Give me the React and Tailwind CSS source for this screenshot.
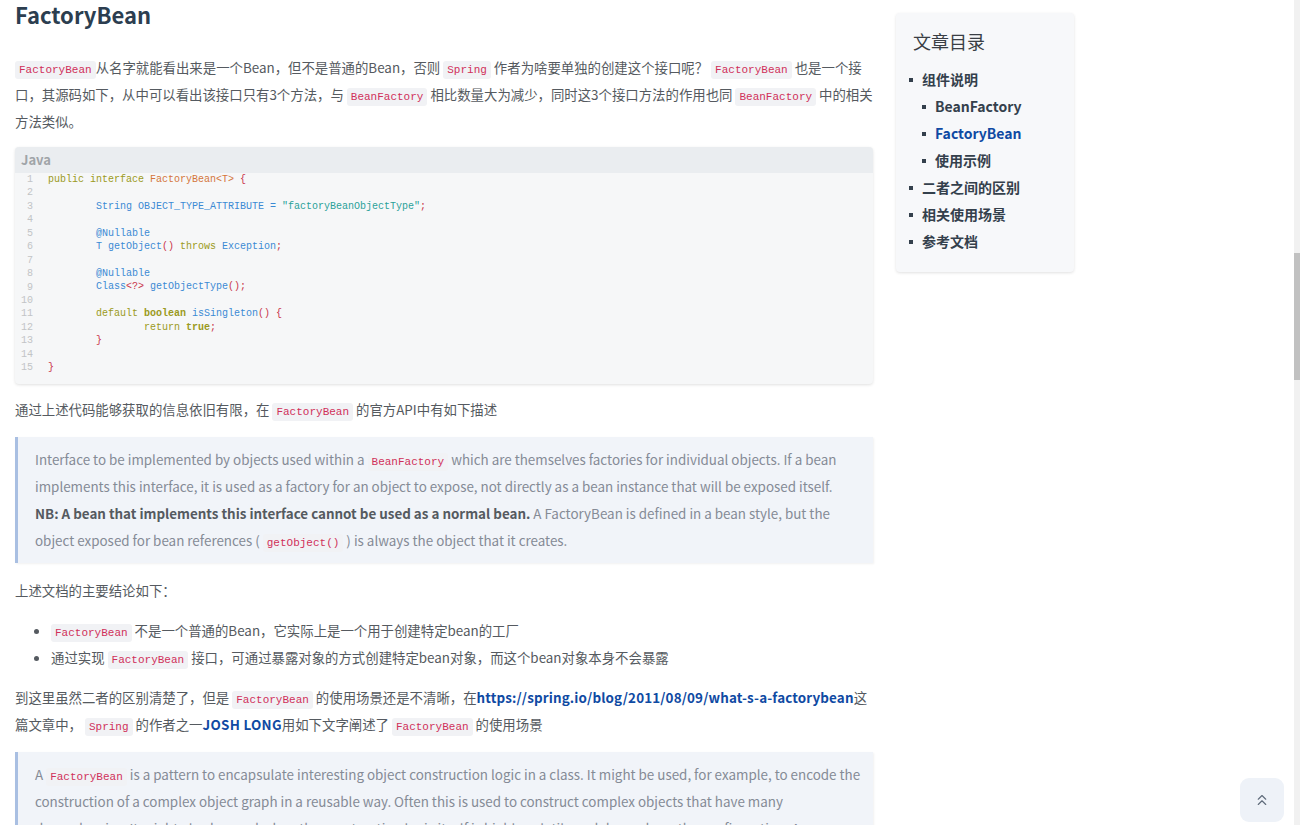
import React from "react";
import { ChevronsUp } from "lucide-react";

const C = ({ children }) => (
  <code className="font-['Liberation_Mono',monospace] text-[11px] leading-[14px] text-[#d0305a] bg-[#f1f2f5] px-[4px] py-[3px] rounded-[3px]">
    {children}
  </code>
);

const KW = "text-[#9b9a21]";
const OR = "text-[#d4763b]";
const BL = "text-[#3b8ad4]";
const RD = "text-[#c9344a]";
const TL = "text-[#2aa198]";

const T = "        ";
const codeLines = [
  [[KW, "public interface "], [OR, "FactoryBean<T>"], [RD, " {"]],
  [],
  [["", T], [BL, "String OBJECT_TYPE_ATTRIBUTE = "], [TL, '"factoryBeanObjectType"'], [RD, ";"]],
  [],
  [["", T], [BL, "@Nullable"]],
  [["", T], [BL, "T getObject"], [RD, "()"], [KW, " throws "], [BL, "Exception"], [RD, ";"]],
  [],
  [["", T], [BL, "@Nullable"]],
  [["", T], [BL, "Class"], [RD, "<?>"], [BL, " getObjectType"], [RD, "();"]],
  [],
  [["", T], [KW, "default "], [KW + " font-bold", "boolean"], [BL, " isSingleton"], [RD, "() {"]],
  [["", T + T], [KW, "return "], [KW + " font-bold", "true"], [RD, ";"]],
  [["", T], [RD, "}"]],
  [],
  [[RD, "}"]],
];

const tocItems = [
  { t: "组件说明", lvl: 1 },
  { t: "BeanFactory", lvl: 2 },
  { t: "FactoryBean", lvl: 2, active: true },
  { t: "使用示例", lvl: 2 },
  { t: "二者之间的区别", lvl: 1 },
  { t: "相关使用场景", lvl: 1 },
  { t: "参考文档", lvl: 1 },
];

export default function App() {
  return (
    <div className="w-[1300px] h-[825px] overflow-hidden bg-white flex font-['Noto_Sans_CJK_SC',sans-serif]">
      <div className="flex-1 relative flex items-start pl-[15px]">
        {/* main content */}
        <div className="w-[858px] shrink-0 text-[13.4px] leading-[27px] text-[#555a60]">
          <h2 className="text-[22px] leading-[28px] font-bold text-[#2c3e50]">FactoryBean</h2>

          <p className="mt-[26px]">
            <C>FactoryBean</C>从名字就能看出来是一个Bean，但不是普通的Bean，否则 <C>Spring</C> 作者为啥要单独的创建这个接口呢？ <C>FactoryBean</C> 也是一个接口，其源码如下，从中可以看出该接口只有3个方法，与 <C>BeanFactory</C> 相比数量大为减少，同时这3个接口方法的作用也同 <C>BeanFactory</C> 中的相关方法类似。
          </p>

          <div className="mt-[12px] rounded-[4px] overflow-hidden bg-[#f6f7f8] shadow-[0_1px_3px_rgba(0,0,0,0.12)]">
            <div className="h-[26px] bg-[#eaedf0] px-[6px] text-[13px] leading-[26px] font-bold text-[#a0a4a8]">Java</div>
            <div className="flex pb-[9px] font-['Liberation_Mono',monospace] text-[10px] leading-[13.43px]">
              <div className="w-[18px] shrink-0 pr-[15px] text-right text-[#c2c4c6] box-content">
                {codeLines.map((_, i) => (
                  <div key={i}>{i + 1}</div>
                ))}
              </div>
              <div className="whitespace-pre">
                {codeLines.map((line, i) => (
                  <div key={i} className="h-[13.43px]">
                    {line.map(([cls, s], j) => (
                      <span key={j} className={cls}>{s}</span>
                    ))}
                  </div>
                ))}
              </div>
            </div>
          </div>

          <p className="mt-[12px]">
            通过上述代码能够获取的信息依旧有限，在 <C>FactoryBean</C> 的官方API中有如下描述
          </p>

          <blockquote className="mt-[14px] border-l-[3px] border-[#a9bfe2] bg-[#f1f4f9] pl-[17px] pr-[6px] py-[9px] text-[#858b96] shadow-[1px_1px_2px_rgba(0,0,0,0.06)]">
            Interface to be implemented by objects used within a  <C>BeanFactory</C>  which are themselves factories for individual objects. If a bean implements this interface, it is used as a factory for an object to expose, not directly as a bean instance that will be exposed itself.
            <br />
            <b className="text-[#555a60]">NB: A bean that implements this interface cannot be used as a normal bean.</b> A FactoryBean is defined in a bean style, but the object exposed for bean references ( <C>getObject()</C> ) is always the object that it creates.
          </blockquote>

          <p className="mt-[14px]">上述文档的主要结论如下：</p>

          <ul className="mt-[13px] pl-[36px] list-disc marker:text-[#555a60]">
            <li><C>FactoryBean</C> 不是一个普通的Bean，它实际上是一个用于创建特定bean的工厂</li>
            <li>通过实现 <C>FactoryBean</C> 接口，可通过暴露对象的方式创建特定bean对象，而这个bean对象本身不会暴露</li>
          </ul>

          <p className="mt-[13px]">
            到这里虽然二者的区别清楚了，但是 <C>FactoryBean</C> 的使用场景还是不清晰，在<a className="font-bold tracking-[0.15px] text-[#0f4aa3]">https://spring.io/blog/2011/08/09/what-s-a-factorybean</a>这篇文章中， <C>Spring</C> 的作者之一<b className="text-[#0f4aa3] tracking-[0.3px]">JOSH LONG</b>用如下文字阐述了 <C>FactoryBean</C> 的使用场景
          </p>

          <blockquote className="mt-[14px] border-l-[3px] border-[#a9bfe2] bg-[#f1f4f9] pl-[17px] pr-[6px] py-[9px] text-[#858b96] shadow-[1px_1px_2px_rgba(0,0,0,0.06)]">
            A  <C>FactoryBean</C>  is a pattern to encapsulate interesting object construction logic in a class. It might be used, for example, to encode the construction of a complex object graph in a reusable way. Often this is used to construct complex objects that have many dependencies. It might also be used when the construction logic itself is highly volatile and depends on the configuration. A FactoryBean is also useful to help Spring construct objects that it couldn’t easily construct itself.
          </blockquote>
        </div>

        {/* TOC */}
        <div className="ml-[23px] mt-[13px] w-[178px] shrink-0 bg-[#f7f8fa] rounded-[4px] shadow-[0_1px_3px_rgba(0,0,0,0.12)] pt-[14px] pb-[17px]">
          <div className="pl-[17px] text-[18px] leading-[28px] text-[#3a3f45]">文章目录</div>
          <ul className="mt-[11px]">
            {tocItems.map((it) => (
              <li
                key={it.t}
                className={`flex items-center h-[27px] text-[14px] font-bold ${it.lvl === 1 ? "pl-[13px]" : "pl-[26px]"} ${it.active ? "text-[#0f4aa3]" : "text-[#34404c]"}`}
              >
                <span className="w-[4px] h-[4px] bg-[#34404c] mr-[9px] shrink-0" />
                {it.t}
              </li>
            ))}
          </ul>
        </div>

        {/* back to top */}
        <div className="absolute right-[10px] bottom-[3px] w-[44px] h-[44px] rounded-[9px] bg-[#eef2f8] flex items-center justify-center">
          <ChevronsUp size={18} strokeWidth={1.5} color="#5f6b7a" />
        </div>
      </div>

      {/* scrollbar */}
      <div className="w-[6px] shrink-0 bg-[#f1f1f1]">
        <div className="mt-[253px] h-[127px] bg-[#c1c1c1]" />
      </div>
    </div>
  );
}
